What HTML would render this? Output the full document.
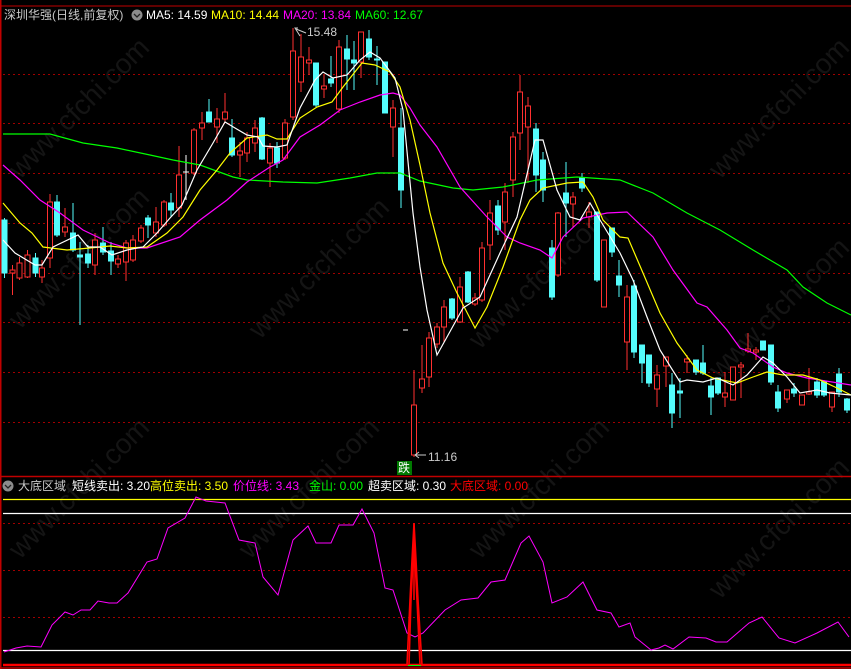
<!DOCTYPE html>
<html><head><meta charset="utf-8"><style>
html,body{margin:0;padding:0;background:#000;}
body{width:851px;height:669px;overflow:hidden;position:relative;font-family:"Liberation Sans","Noto Sans CJK SC",sans-serif;}
.t{position:absolute;font-size:12px;white-space:nowrap;line-height:14px;}
</style></head><body>
<svg width="851" height="669" style="position:absolute;left:0;top:0" xmlns="http://www.w3.org/2000/svg">
<g fill="#141414" font-family="Liberation Sans,sans-serif" font-size="28">
<text transform="translate(20,330) rotate(-45)">www.cfchi.com</text>
<text transform="translate(20,180) rotate(-45)">www.cfchi.com</text>
<text transform="translate(260,340) rotate(-45)">www.cfchi.com</text>
<text transform="translate(250,560) rotate(-45)">www.cfchi.com</text>
<text transform="translate(480,350) rotate(-45)">www.cfchi.com</text>
<text transform="translate(480,560) rotate(-45)">www.cfchi.com</text>
<text transform="translate(720,180) rotate(-45)">www.cfchi.com</text>
<text transform="translate(720,380) rotate(-45)">www.cfchi.com</text>
<text transform="translate(720,600) rotate(-45)">www.cfchi.com</text>
<text transform="translate(20,560) rotate(-45)">www.cfchi.com</text>
</g>
<line x1="0" y1="6" x2="851" y2="6" stroke="#c00000" stroke-width="1"/>
<line x1="0.5" y1="0" x2="0.5" y2="669" stroke="#c00000" stroke-width="2"/>
<line x1="0" y1="476.5" x2="851" y2="476.5" stroke="#c00000" stroke-width="1.5"/>
<line x1="0" y1="668" x2="851" y2="668" stroke="#c00000" stroke-width="1.5"/>
<g stroke="#a00000" stroke-width="1" stroke-dasharray="2,3">
<line x1="3" y1="74.5" x2="851" y2="74.5"/><line x1="3" y1="123.5" x2="851" y2="123.5"/>
<line x1="3" y1="173.5" x2="851" y2="173.5"/><line x1="3" y1="223.5" x2="851" y2="223.5"/>
<line x1="3" y1="273.5" x2="851" y2="273.5"/><line x1="3" y1="322.5" x2="851" y2="322.5"/>
<line x1="3" y1="372.5" x2="851" y2="372.5"/><line x1="3" y1="422.5" x2="851" y2="422.5"/>
<line x1="3" y1="523.5" x2="851" y2="523.5"/><line x1="3" y1="570.5" x2="851" y2="570.5"/>
<line x1="3" y1="617.5" x2="851" y2="617.5"/>
</g>
<g stroke-width="1">
<g stroke="#54fcfc" fill="#54fcfc">
<line x1="4.5" y1="218" x2="4.5" y2="278"/><rect x="2" y="220" width="5" height="53"/>
<line x1="35.5" y1="253" x2="35.5" y2="277"/><rect x="33" y="258" width="5" height="15"/>
<line x1="57" y1="195" x2="57" y2="237"/><rect x="54.5" y="202" width="5" height="33"/>
<line x1="73" y1="203" x2="73" y2="252"/><rect x="70.5" y="233" width="5" height="17"/>
<line x1="80" y1="242" x2="80" y2="325"/><rect x="77.5" y="255" width="5" height="2"/>
<line x1="88" y1="245" x2="88" y2="268"/><rect x="85.5" y="254" width="5" height="9"/>
<line x1="103" y1="227" x2="103" y2="255"/><rect x="100.5" y="243" width="5" height="9"/>
<line x1="111" y1="242" x2="111" y2="275"/><rect x="108.5" y="251" width="5" height="10"/>
<line x1="148" y1="215" x2="148" y2="238"/><rect x="145.5" y="218" width="5" height="7"/>
<line x1="171" y1="193" x2="171" y2="217"/><rect x="168.5" y="203" width="5" height="7"/>
<line x1="209" y1="99" x2="209" y2="122"/><rect x="206.5" y="112" width="5" height="10"/>
<line x1="232" y1="119" x2="232" y2="157"/><rect x="229.5" y="138" width="5" height="17"/>
<line x1="262" y1="117" x2="262" y2="160"/><rect x="259.5" y="118" width="5" height="41"/>
<line x1="277" y1="142" x2="277" y2="168"/><rect x="274.5" y="148" width="5" height="15"/>
<line x1="316" y1="63" x2="316" y2="107"/><rect x="313.5" y="63" width="5" height="42"/>
<line x1="331" y1="56" x2="331" y2="87"/><rect x="328.5" y="79" width="5" height="4"/>
<line x1="347" y1="35" x2="347" y2="90"/><rect x="344.5" y="49" width="5" height="10"/>
<line x1="354" y1="41" x2="354" y2="90"/><rect x="351.5" y="60" width="5" height="3"/>
<line x1="369" y1="30" x2="369" y2="60"/><rect x="366.5" y="39" width="5" height="18"/>
<line x1="377" y1="46" x2="377" y2="85"/><rect x="374.5" y="59" width="5" height="1"/>
<line x1="385" y1="62" x2="385" y2="113"/><rect x="382.5" y="62" width="5" height="51"/>
<line x1="401" y1="108" x2="401" y2="208"/><rect x="398.5" y="128" width="5" height="62"/>
<line x1="452" y1="298" x2="452" y2="320"/><rect x="449.5" y="299" width="5" height="19"/>
<line x1="468" y1="271" x2="468" y2="303"/><rect x="465.5" y="272" width="5" height="30"/>
<line x1="498" y1="200" x2="498" y2="235"/><rect x="495.5" y="206" width="5" height="24"/>
<line x1="536" y1="123" x2="536" y2="192"/><rect x="533.5" y="129" width="5" height="46"/>
<line x1="543" y1="152" x2="543" y2="202"/><rect x="540.5" y="160" width="5" height="30"/>
<line x1="552" y1="240" x2="552" y2="300"/><rect x="549.5" y="248" width="5" height="49"/>
<line x1="566" y1="162" x2="566" y2="237"/><rect x="563.5" y="193" width="5" height="10"/>
<line x1="582" y1="173" x2="582" y2="192"/><rect x="579.5" y="178" width="5" height="10"/>
<line x1="597" y1="212" x2="597" y2="282"/><rect x="594.5" y="212" width="5" height="68"/>
<line x1="612" y1="228" x2="612" y2="257"/><rect x="609.5" y="228" width="5" height="24"/>
<line x1="619" y1="260" x2="619" y2="297"/><rect x="616.5" y="276" width="5" height="9"/>
<line x1="634" y1="280" x2="634" y2="358"/><rect x="631.5" y="286" width="5" height="66"/>
<line x1="642" y1="345" x2="642" y2="383"/><rect x="639.5" y="345" width="5" height="18"/>
<line x1="649" y1="355" x2="649" y2="387"/><rect x="646.5" y="355" width="5" height="28"/>
<line x1="672" y1="373" x2="672" y2="428"/><rect x="669.5" y="385" width="5" height="28"/>
<line x1="680" y1="378" x2="680" y2="418"/><rect x="677.5" y="391" width="5" height="2"/>
<line x1="696" y1="360" x2="696" y2="375"/><rect x="693.5" y="360" width="5" height="12"/>
<line x1="703" y1="345" x2="703" y2="375"/><rect x="700.5" y="363" width="5" height="10"/>
<line x1="711" y1="378" x2="711" y2="415"/><rect x="708.5" y="386" width="5" height="11"/>
<line x1="718" y1="378" x2="718" y2="395"/><rect x="715.5" y="378" width="5" height="15"/>
<line x1="763" y1="341" x2="763" y2="350"/><rect x="760.5" y="341" width="5" height="9"/>
<line x1="771" y1="345" x2="771" y2="385"/><rect x="768.5" y="345" width="5" height="37"/>
<line x1="778" y1="385" x2="778" y2="412"/><rect x="775.5" y="392" width="5" height="16"/>
<line x1="794" y1="383" x2="794" y2="397"/><rect x="791.5" y="389" width="5" height="4"/>
<line x1="817" y1="378" x2="817" y2="398"/><rect x="814.5" y="382" width="5" height="13"/>
<line x1="824" y1="380" x2="824" y2="397"/><rect x="821.5" y="382" width="5" height="13"/>
<line x1="839" y1="368" x2="839" y2="397"/><rect x="836.5" y="374" width="5" height="18"/>
<line x1="847" y1="398" x2="847" y2="413"/><rect x="844.5" y="399" width="5" height="11"/>
</g>
<g stroke="#ff3030" fill="#000">
<line x1="12.5" y1="265" x2="12.5" y2="295"/><rect x="10" y="270" width="5" height="3"/>
<line x1="19.5" y1="257" x2="19.5" y2="280"/><rect x="17" y="263" width="5" height="15"/>
<line x1="27.5" y1="250" x2="27.5" y2="278"/><rect x="25" y="255" width="5" height="22"/>
<line x1="42" y1="260" x2="42" y2="283"/><rect x="39.5" y="268" width="5" height="9"/>
<line x1="50" y1="194" x2="50" y2="268"/><rect x="47.5" y="202" width="5" height="56"/>
<line x1="65" y1="208" x2="65" y2="237"/><rect x="62.5" y="227" width="5" height="5"/>
<line x1="95" y1="233" x2="95" y2="275"/><rect x="92.5" y="240" width="5" height="25"/>
<line x1="118" y1="255" x2="118" y2="268"/><rect x="115.5" y="259" width="5" height="5"/>
<line x1="126" y1="240" x2="126" y2="281"/><rect x="123.5" y="243" width="5" height="19"/>
<line x1="133" y1="235" x2="133" y2="262"/><rect x="130.5" y="240" width="5" height="20"/>
<line x1="141" y1="225" x2="141" y2="243"/><rect x="138.5" y="228" width="5" height="13"/>
<line x1="156" y1="207" x2="156" y2="237"/><rect x="153.5" y="222" width="5" height="11"/>
<line x1="164" y1="200" x2="164" y2="227"/><rect x="161.5" y="202" width="5" height="23"/>
<line x1="179" y1="146" x2="179" y2="217"/><rect x="176.5" y="175" width="5" height="33"/>
<line x1="194" y1="128" x2="194" y2="175"/><rect x="191.5" y="130" width="5" height="43"/>
<line x1="202" y1="112" x2="202" y2="140"/><rect x="199.5" y="123" width="5" height="5"/>
<line x1="217" y1="108" x2="217" y2="143"/><rect x="214.5" y="119" width="5" height="8"/>
<line x1="225" y1="93" x2="225" y2="123"/><rect x="222.5" y="112" width="5" height="7"/>
<line x1="240" y1="142" x2="240" y2="177"/><rect x="237.5" y="151" width="5" height="4"/>
<line x1="247" y1="132" x2="247" y2="162"/><rect x="244.5" y="138" width="5" height="15"/>
<line x1="255" y1="120" x2="255" y2="152"/><rect x="252.5" y="128" width="5" height="15"/>
<line x1="270" y1="143" x2="270" y2="187"/><rect x="267.5" y="148" width="5" height="15"/>
<line x1="285" y1="119" x2="285" y2="160"/><rect x="282.5" y="123" width="5" height="35"/>
<line x1="293" y1="28" x2="293" y2="120"/><rect x="290.5" y="51" width="5" height="66"/>
<line x1="301" y1="34" x2="301" y2="92"/><rect x="298.5" y="57" width="5" height="25"/>
<line x1="309" y1="47" x2="309" y2="75"/><rect x="306.5" y="60" width="5" height="3"/>
<line x1="324" y1="75" x2="324" y2="98"/><rect x="321.5" y="86" width="5" height="3"/>
<line x1="339" y1="40" x2="339" y2="113"/><rect x="336.5" y="47" width="5" height="62"/>
<line x1="361" y1="32" x2="361" y2="78"/><rect x="358.5" y="32" width="5" height="30"/>
<line x1="393" y1="100" x2="393" y2="157"/><rect x="390.5" y="108" width="5" height="19"/>
<line x1="414" y1="370" x2="414" y2="457"/><rect x="411.5" y="405" width="5" height="50"/>
<line x1="422" y1="345" x2="422" y2="393"/><rect x="419.5" y="379" width="5" height="9"/>
<line x1="429" y1="332" x2="429" y2="387"/><rect x="426.5" y="338" width="5" height="39"/>
<line x1="437" y1="323" x2="437" y2="348"/><rect x="434.5" y="327" width="5" height="17"/>
<line x1="444" y1="300" x2="444" y2="342"/><rect x="441.5" y="307" width="5" height="20"/>
<line x1="460" y1="277" x2="460" y2="323"/><rect x="457.5" y="287" width="5" height="35"/>
<line x1="475" y1="293" x2="475" y2="306"/><rect x="472.5" y="298" width="5" height="6"/>
<line x1="482" y1="242" x2="482" y2="302"/><rect x="479.5" y="248" width="5" height="52"/>
<line x1="490" y1="200" x2="490" y2="260"/><rect x="487.5" y="213" width="5" height="32"/>
<line x1="505" y1="183" x2="505" y2="250"/><rect x="502.5" y="192" width="5" height="30"/>
<line x1="513" y1="132" x2="513" y2="197"/><rect x="510.5" y="137" width="5" height="43"/>
<line x1="520" y1="75" x2="520" y2="150"/><rect x="517.5" y="92" width="5" height="41"/>
<line x1="528" y1="97" x2="528" y2="183"/><rect x="525.5" y="106" width="5" height="21"/>
<line x1="558" y1="212" x2="558" y2="277"/><rect x="555.5" y="213" width="5" height="62"/>
<line x1="573" y1="192" x2="573" y2="227"/><rect x="570.5" y="197" width="5" height="7"/>
<line x1="589" y1="202" x2="589" y2="228"/><rect x="586.5" y="212" width="5" height="5"/>
<line x1="604" y1="240" x2="604" y2="307"/><rect x="601.5" y="240" width="5" height="67"/>
<line x1="627" y1="285" x2="627" y2="370"/><rect x="624.5" y="297" width="5" height="45"/>
<line x1="657" y1="365" x2="657" y2="407"/><rect x="654.5" y="375" width="5" height="14"/>
<line x1="666" y1="357" x2="666" y2="387"/><rect x="663.5" y="357" width="5" height="9"/>
<line x1="687" y1="355" x2="687" y2="373"/><rect x="684.5" y="359" width="5" height="3"/>
<line x1="725" y1="372" x2="725" y2="407"/><rect x="722.5" y="393" width="5" height="4"/>
<line x1="733" y1="367" x2="733" y2="400"/><rect x="730.5" y="367" width="5" height="33"/>
<line x1="741" y1="362" x2="741" y2="398"/><rect x="738.5" y="365" width="5" height="2"/>
<line x1="748" y1="333" x2="748" y2="353"/><rect x="745.5" y="349" width="5" height="2"/>
<line x1="756" y1="347" x2="756" y2="360"/><rect x="753.5" y="350" width="5" height="2"/>
<line x1="787" y1="390" x2="787" y2="403"/><rect x="784.5" y="390" width="5" height="9"/>
<line x1="802" y1="395" x2="802" y2="405"/><rect x="799.5" y="395" width="5" height="10"/>
<line x1="809" y1="368" x2="809" y2="395"/><rect x="806.5" y="392" width="5" height="2"/>
<line x1="832" y1="392" x2="832" y2="412"/><rect x="829.5" y="392" width="5" height="15"/>
</g>
<line x1="186" y1="155" x2="186" y2="200" stroke="#fff"/><line x1="183" y1="172" x2="189" y2="172" stroke="#fff"/>
<line x1="403" y1="330" x2="408" y2="330" stroke="#fff"/>
</g>
<g fill="none" stroke-width="1.2">
<polyline stroke="#00ff00" points="3,134 50,134 83,143 117,148 150,155 173,160 200,165 233,177 247,180 283,182 317,183 350,178 377,173 400,173 420,181 453,188 473,190 503,187 537,180 577,177 620,180 653,193 687,213 720,230 753,250 787,270 803,287 827,303 851,315"/>
<polyline stroke="#ff00ff" points="3,165 20,180 40,200 60,213 83,230 110,243 127,248 147,248 180,237 200,220 227,200 247,182 270,167 283,160 300,137 320,125 340,110 360,102 380,95 393,93 400,95 410,108 420,125 437,147 460,187 487,217 507,237 520,243 540,250 552,258 563,237 583,218 607,213 627,212 653,237 673,270 697,303 707,307 727,330 740,348 753,353 773,367 787,373 807,378 851,385"/>
<polyline stroke="#ffff00" points="3,203 20,223 32,233 43,247 67,250 90,248 110,246 127,248 147,247 167,233 183,217 200,190 217,170 230,153 247,138 267,135 277,139 287,139 300,118 317,107 332,102 343,87 362,63 375,65 390,72 400,87 410,120 420,165 430,213 443,263 457,293 475,328 487,307 503,267 520,220 530,200 543,188 567,183 583,182 593,197 603,220 620,237 628,238 643,273 660,313 677,343 697,370 713,378 737,383 753,377 767,372 783,375 803,375 820,380 837,388 851,395"/>
<polyline stroke="#ffffff" points="3,240 15,253 35,265 42,265 53,247 78,235 88,247 100,247 112,255 127,250 143,247 157,233 170,218 182,205 197,170 213,143 225,122 235,128 247,135 258,137 263,146 277,147 287,145 300,108 315,80 323,72 333,78 347,75 360,60 370,52 380,58 395,78 403,110 413,213 420,267 427,310 437,355 447,337 463,308 480,297 500,253 517,217 535,140 543,140 557,190 570,217 580,220 590,203 600,220 620,253 633,280 647,317 660,350 680,382 687,380 703,382 717,378 733,385 747,375 763,357 773,363 787,377 800,393 817,390 830,393 851,395"/>
</g>
<polyline points="300,36 295,28 298,28" fill="none" stroke="#ccc" stroke-width="1"/>
<line x1="296" y1="29" x2="306" y2="33" stroke="#ccc"/>
<line x1="415" y1="455" x2="426" y2="455" stroke="#ccc"/>
<polyline points="419,452 415,455 419,458" fill="none" stroke="#ccc"/>
<rect x="397" y="461" width="15" height="14" fill="#007a00"/>
<line x1="3" y1="499.5" x2="851" y2="499.5" stroke="#ffff00" stroke-width="1.2"/>
<line x1="3" y1="513.5" x2="851" y2="513.5" stroke="#ffffff" stroke-width="1.2"/>
<line x1="3" y1="650.5" x2="851" y2="650.5" stroke="#ffffff" stroke-width="1.2"/>
<polyline fill="none" stroke="#ff00ff" stroke-width="1" points="4,652 16,648 27,646 41,647 52,625 65,612 73,615 81,610 90,610 98,601 109,603 117,603 128,593 147,562 157,559 168,528 185,518 196,497 206,501 225,503 239,540 255,543 263,577 278,595 293,540 308,526 316,543 331,543 339,525 353,525 362,509 374,533 385,588 393,590 407,633 415,637 423,633 445,610 461,600 478,598 491,582 505,580 521,543 529,536 543,562 552,603 567,597 583,582 597,610 611,613 619,627 630,623 635,637 651,650 659,648 665,645 673,649 689,637 706,638 716,642 727,642 749,623 762,617 779,638 795,643 817,633 838,622 849,637"/>
<line x1="3" y1="665" x2="851" y2="665" stroke="#ff0000" stroke-width="2.5"/>
<g fill="none" stroke="#ff0000" stroke-width="1.6">
<polyline points="407,665 410,600 412,560 414,523 416,560 418,600 422,665"/>
<polyline points="409,665 411,600 413,560 414,540 415,560 417,600 420,665"/>
<line x1="414" y1="523" x2="414" y2="600"/>
</g>
<line x1="408" y1="665.5" x2="421" y2="665.5" stroke="#00ff00" stroke-width="1"/>
<circle cx="137" cy="15" r="5.5" fill="#8c8c8c"/><polyline points="134,14 137,17 140,14" fill="none" stroke="#222" stroke-width="1.3"/>
<circle cx="8" cy="486" r="5.5" fill="#8c8c8c"/><polyline points="5,485 8,488 11,485" fill="none" stroke="#222" stroke-width="1.3"/>
</svg>
<div class="t" style="left:4px;top:8px;color:#c8c8c8;">深圳华强(日线,前复权)</div>
<div class="t" style="left:146px;top:8px;color:#fff;">MA5: 14.59</div>
<div class="t" style="left:211px;top:8px;color:#ffff00;">MA10: 14.44</div>
<div class="t" style="left:283px;top:8px;color:#ff00ff;">MA20: 13.84</div>
<div class="t" style="left:355px;top:8px;color:#00ff00;">MA60: 12.67</div>
<div class="t" style="left:307px;top:25px;color:#ccc;">15.48</div>
<div class="t" style="left:428px;top:450px;color:#ccc;">11.16</div>
<div class="t" style="left:398px;top:461px;color:#fff;">跌</div>
<div class="t" style="left:18px;top:479px;color:#c8c8c8;">大底区域</div>
<div class="t" style="left:72px;top:479px;color:#fff;">短线卖出: 3.20</div>
<div class="t" style="left:150px;top:479px;color:#ffff00;">高位卖出: 3.50</div>
<div class="t" style="left:233px;top:479px;color:#ff00ff;">价位线: 3.43</div>
<div class="t" style="left:309px;top:479px;color:#00ff00;">金山: 0.00</div>
<div class="t" style="left:368px;top:479px;color:#fff;">超卖区域: 0.30</div>
<div class="t" style="left:450px;top:479px;color:#ff0000;">大底区域: 0.00</div>
</body></html>
